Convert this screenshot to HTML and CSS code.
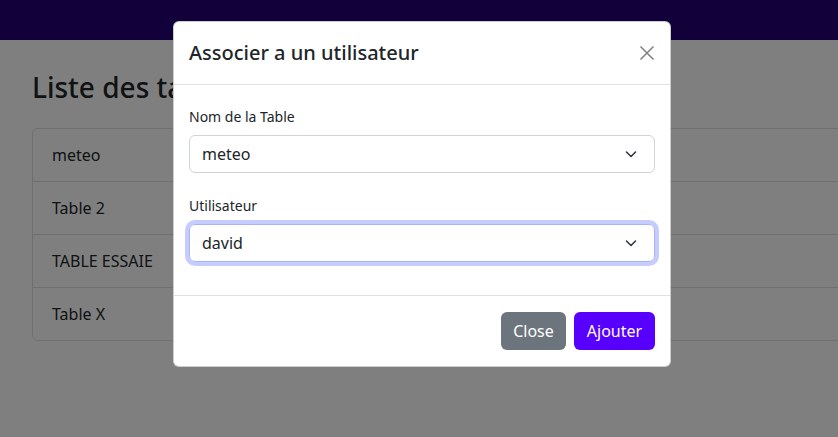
FILE: index.html
```html
<!DOCTYPE html>
<html lang="fr">
<head>
<meta charset="utf-8">
<title>Liste des tables</title>
<link rel="stylesheet" href="styles.css">
</head>
<body>
<nav class="navbar"></nav>
<main class="page">
  <h2 class="page-title">Liste des tables</h2>
  <ul class="list-group">
    <li class="list-item">meteo</li>
    <li class="list-item">Table 2</li>
    <li class="list-item">TABLE ESSAIE</li>
    <li class="list-item">Table X</li>
  </ul>
</main>
<div class="backdrop"></div>
<div class="modal">
  <div class="modal-header">
    <h5 class="modal-title">Associer a un utilisateur</h5>
    <button class="btn-close" type="button" aria-label="Close">
      <svg width="16" height="16" viewBox="0 0 16 16"><path d="M1.5 1.5L14.5 14.5M14.5 1.5L1.5 14.5" stroke="#808080" stroke-width="1.5" fill="none"/></svg>
    </button>
  </div>
  <div class="modal-body">
    <div class="field">
      <label class="form-label">Nom de la Table</label>
      <div class="select">
        <span>meteo</span>
        <svg class="chev" width="12" height="12" viewBox="0 0 12 12"><path d="M1.5 4L6 8.5L10.5 4" stroke="#343a40" stroke-width="1.6" fill="none" stroke-linecap="round" stroke-linejoin="round"/></svg>
      </div>
    </div>
    <div class="field">
      <label class="form-label">Utilisateur</label>
      <div class="select focus">
        <span>david</span>
        <svg class="chev" width="12" height="12" viewBox="0 0 12 12"><path d="M1.5 4L6 8.5L10.5 4" stroke="#343a40" stroke-width="1.6" fill="none" stroke-linecap="round" stroke-linejoin="round"/></svg>
      </div>
    </div>
  </div>
  <div class="modal-footer">
    <button class="btn btn-secondary" type="button">Close</button>
    <button class="btn btn-primary" type="button">Ajouter</button>
  </div>
</div>
</body>
</html>
```
FILE: styles.css
```css
* { box-sizing: border-box; }
html, body { margin: 0; padding: 0; }
body {
  font-family: "Noto Sans", "Open Sans", sans-serif;
  color: #212529;
  background: #fff;
  width: 838px;
  height: 437px;
  overflow: hidden;
  position: relative;
}
.navbar {
  height: 40px;
  background: #240074;
}
.page {
  padding: 0 0 0 32px;
}
.page-title {
  margin: 0;
  padding-top: 30px;
  height: 88px;
  font-size: 28px;
  font-weight: 500;
  line-height: 34px;
}
.list-group {
  list-style: none;
  margin: 0;
  padding: 0;
  width: 830px;
  border: 1px solid rgba(0,0,0,.125);
  border-radius: 6px;
}
.list-item {
  height: 53px;
  padding: 14px 19px;
  font-size: 16px;
  line-height: 24px;
  border-top: 1px solid rgba(0,0,0,.125);
}
.list-item:first-child { border-top: 0; height: 52px; }
.backdrop {
  position: absolute;
  inset: 0;
  background: rgba(0,0,0,.5);
}
.modal {
  position: absolute;
  left: 173px;
  top: 21px;
  width: 498px;
  background: #fff;
  border: 1px solid rgba(0,0,0,.2);
  border-radius: 6px;
}
.modal-header {
  display: flex;
  align-items: center;
  justify-content: space-between;
  padding: 16px 15px 16px 15px;
  border-bottom: 1px solid #dee2e6;
}
.modal-title {
  margin: 0;
  font-size: 20px;
  font-weight: 500;
  line-height: 30px;
}
.btn-close {
  border: 0;
  background: transparent;
  padding: 0;
  width: 16px;
  height: 16px;
  display: flex;
  align-items: center;
  justify-content: center;
}
.modal-body {
  padding: 15px 15px 17px;
}
.field {
  padding-top: 6px;
  padding-bottom: 16px;
}
.form-label {
  display: block;
  font-size: 14px;
  line-height: 21px;
  margin-bottom: 8px;
}
.select {
  display: flex;
  align-items: center;
  justify-content: space-between;
  height: 38px;
  padding: 0 17px 0 12px;
  border: 1px solid #ced4da;
  border-radius: 6px;
  font-size: 16px;
  line-height: 24px;
}
.select.focus {
  border-color: #a9b3fd;
  box-shadow: 0 0 0 4px #c6ccfd;
}
.chev { display: block; }
.modal-footer {
  display: flex;
  justify-content: flex-end;
  gap: 8px;
  padding: 16px 15px 16px;
  border-top: 1px solid #dee2e6;
}
.btn {
  height: 38px;
  border: 0;
  border-radius: 6px;
  padding: 0 12px;
  font-family: inherit;
  font-size: 16px;
  line-height: 24px;
  color: #fff;
}
.btn-secondary { background: #6c757d; width: 65px; }
.btn-primary { background: #5800ff; width: 81px; }
```
